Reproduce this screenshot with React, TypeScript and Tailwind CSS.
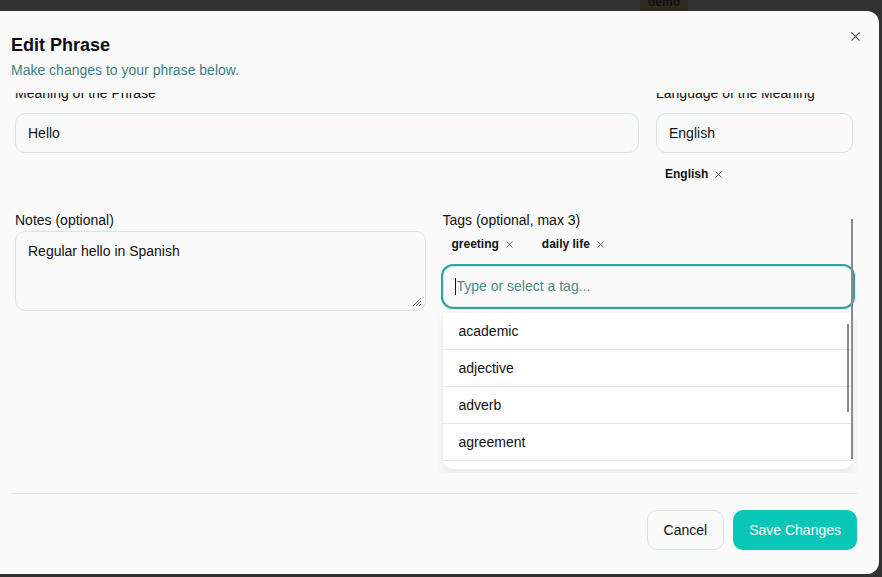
import React from "react";
import { X } from "lucide-react";

const suggestions = ["academic", "adjective", "adverb", "agreement", "animals"];

function Chip({ label }: { label: string }) {
  return (
    <span className="inline-flex items-center gap-[5px] h-6 px-[9px] text-[12px] font-bold text-[#111]">
      {label}
      <X className="h-[11px] w-[11px] text-[#333]" strokeWidth={1.6} />
    </span>
  );
}

export default function App() {
  return (
    <div className="w-[882px] h-[577px] bg-[#323232] pt-[11px] overflow-hidden relative font-['Liberation_Sans',Arial,sans-serif]">
      <div className="absolute left-[640px] top-0 h-[11px] w-[48px] bg-[#2f2a22] text-[12px] font-bold leading-[10px] text-[#111] text-center overflow-hidden">
        <span className="relative -top-[3px]">demo</span>
      </div>

      <div className="relative w-[879px] h-[563px] bg-[#fafafa] rounded-r-[12px] flex flex-col pl-[11px] pr-[22px]">
        <button className="absolute right-[16px] top-[18px] text-[#555]">
          <X className="h-[15px] w-[15px]" strokeWidth={1.8} />
        </button>

        <div className="pt-[20px]">
          <h2 className="text-[18px] leading-[28px] font-bold text-[#0b0b14]">Edit Phrase</h2>
          <p className="text-[14px] leading-[20px] text-[#3f7f80] mt-px">Make changes to your phrase below.</p>
        </div>

        <div className="relative h-[380px] overflow-hidden mt-[13px]">
          <div className="-mt-[10px] px-[4px]">
            <div className="flex gap-[17px]">
              <div className="flex-1">
                <label className="block text-[14px] leading-[20px] text-[#111]">Meaning of the Phrase</label>
                <div className="mt-[10px] h-[40px] rounded-[10px] border border-[#d3e6e5] bg-[#fafafa] px-[12px] flex items-center text-[14px] text-[#111]">
                  Hello
                </div>
              </div>
              <div className="w-[197px]">
                <label className="block text-[14px] leading-[20px] text-[#111]">Language of the Meaning</label>
                <div className="mt-[10px] h-[40px] rounded-[10px] border border-[#d3e6e5] bg-[#fafafa] px-[12px] flex items-center text-[14px] text-[#111]">
                  English
                </div>
                <div className="mt-[8px]">
                  <Chip label="English" />
                </div>
              </div>
            </div>

            <div className="grid grid-cols-2 gap-[17px] mt-[24px]">
              <div>
                <label className="block text-[14px] leading-[20px] text-[#111]">Notes (optional)</label>
                <div className="relative mt-[1px] h-[80px] rounded-[10px] border border-[#d3e6e5] bg-[#fafafa] px-[12px] pt-[9px] text-[14px] text-[#111]">
                  Regular hello in Spanish
                  <svg className="absolute right-[3px] bottom-[3px]" width="12" height="12" viewBox="0 0 12 12">
                    <path d="M11 3 L3 11 M11 6 L6 11 M11 9 L9 11" stroke="#777" strokeWidth="1" />
                  </svg>
                </div>
              </div>
              <div className="relative">
                <label className="block text-[14px] leading-[20px] text-[#111]">Tags (optional, max 3)</label>
                <div className="flex gap-[9px] mt-[2px]">
                  <Chip label="greeting" />
                  <Chip label="daily life" />
                </div>
                <div className="mt-[10px] h-[41px] rounded-[10px] border border-[#d3e6e5] bg-[#fafafa] ring-2 ring-[#26a99b] px-[11px] flex items-center text-[14px] text-[#4b8a89]">
                  <span className="w-px h-[17px] bg-[#111] mr-px" />
                  Type or select a tag...
                </div>
                <div className="relative mt-[6px] bg-white rounded-b-[10px] shadow-[0_4px_10px_rgba(0,0,0,0.08)] h-[156px] overflow-hidden">
                  {suggestions.map((s) => (
                    <div key={s} className="h-[37px] border-b border-[#e5e7eb] px-[16px] flex items-center text-[14px] text-[#111]">
                      {s}
                    </div>
                  ))}
                  <div className="absolute right-[4px] top-[11px] h-[88px] w-[2px] bg-[#8a8a8a]" />
                </div>
                <div className="absolute right-0 top-[9px] h-[240px] w-[2px] bg-[#8a8a8a]" />
              </div>
            </div>
          </div>
        </div>

        <div className="mt-[20px] border-t border-[#e5e5e5]" />

        <div className="flex justify-end gap-[9px] mt-[16px]">
          <button className="h-[40px] px-[16px] rounded-[10px] border border-[#d3e6e5] bg-[#fafafa] text-[14px] text-[#111]">
            Cancel
          </button>
          <button className="h-[40px] px-[16px] rounded-[10px] bg-[#09c7b6] text-[14px] text-white">
            Save Changes
          </button>
        </div>
      </div>
    </div>
  );
}
